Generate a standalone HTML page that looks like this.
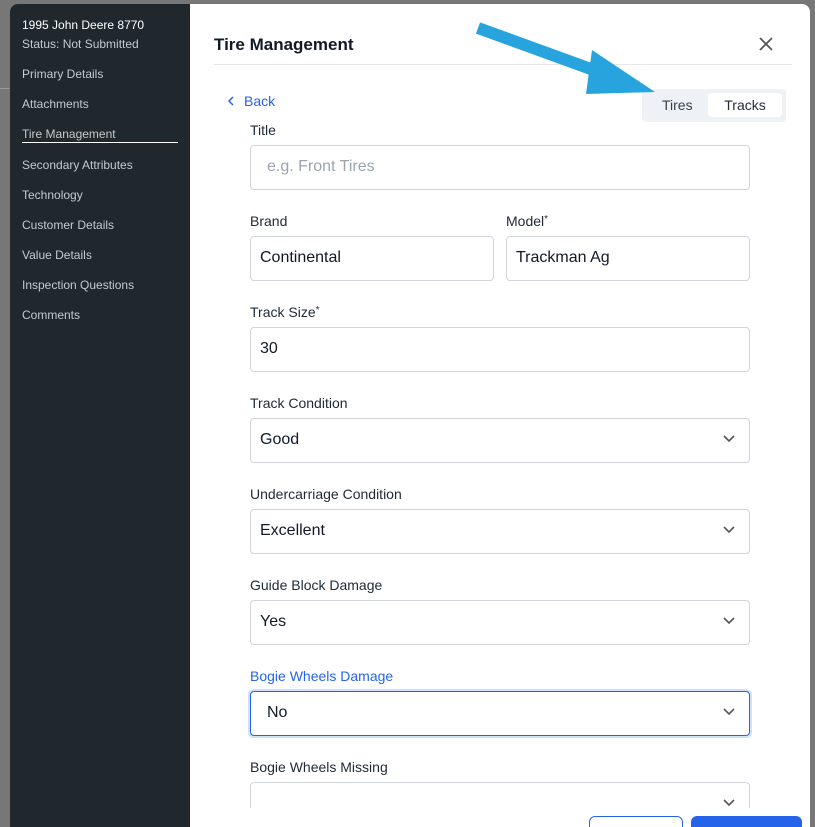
<!DOCTYPE html>
<html><head><style>
*{box-sizing:border-box;margin:0;padding:0}
html,body{width:815px;height:827px;overflow:hidden}
body{background:#777;font-family:"Liberation Sans",sans-serif;position:relative}
.side{position:absolute;left:10px;top:4px;width:180px;height:823px;background:#21282d;border-radius:8px 0 0 0;color:#c5c9cc;font-size:12px}
.side div{position:absolute;left:12px}
.modal{position:absolute;left:190px;top:4px;width:620px;height:823px;background:#fff;border-radius:0 8px 0 0;overflow:hidden}
.abs{position:absolute}
.lbl{position:absolute;left:60px;font-size:14px;color:#1f2937}
.inp{position:absolute;left:60px;width:500px;height:45px;border:1px solid #d1d5db;border-radius:4px;font-size:16px;color:#111827;padding:12px 9px}
.chev{position:absolute;right:14px;top:16px}
sup{font-size:10px;vertical-align:4px}
</style></head><body>
<div class="abs" style="left:0;top:88px;width:10px;height:1px;background:#999"></div>
<div class="side">
<div style="top:14px;color:#fff">1995 John Deere 8770</div>
<div style="top:33px">Status: Not Submitted</div>
<div style="top:63px">Primary Details</div>
<div style="top:93px">Attachments</div>
<div style="top:123px">Tire Management</div>
<div style="top:138px;width:156px;height:1px;background:#fff"></div>
<div style="top:154px">Secondary Attributes</div>
<div style="top:184px">Technology</div>
<div style="top:214px">Customer Details</div>
<div style="top:244px">Value Details</div>
<div style="top:274px">Inspection Questions</div>
<div style="top:304px">Comments</div>
</div>
<div class="modal">
<div class="abs" style="left:24px;top:31px;font-size:17px;font-weight:bold;color:#111827">Tire Management</div>
<svg class="abs" style="left:569px;top:33px" width="14" height="14"><path d="M1 1L13 13M13 1L1 13" stroke="#555" stroke-width="1.8"/></svg>
<div class="abs" style="left:24px;top:60px;width:578px;height:1px;background:#e5e7eb"></div>
<svg class="abs" style="left:37px;top:92px" width="8" height="10"><path d="M6 1L2 5L6 9" stroke="#2563eb" stroke-width="1.5" fill="none"/></svg>
<div class="abs" style="left:54px;top:89px;font-size:14px;color:#2563eb">Back</div>
<div class="abs" style="left:452px;top:85px;width:144px;height:33px;background:#eef1f5;border-radius:4px"></div>
<div class="abs" style="left:472px;top:93px;font-size:14px;color:#374151">Tires</div>
<div class="abs" style="left:518px;top:89px;width:74px;height:24px;background:#fff;border-radius:4px;font-size:14px;color:#1f2937;text-align:center;padding-top:4px">Tracks</div>

<div class="lbl" style="top:118px">Title</div>
<div class="inp" style="top:141px;color:#9ca3af;padding-left:16px">e.g. Front Tires</div>
<div class="lbl" style="top:209px">Brand</div>
<div class="inp" style="top:232px;width:244px">Continental</div>
<div class="lbl" style="top:209px;left:316px">Model<sup>*</sup></div>
<div class="inp" style="top:232px;left:316px;width:244px">Trackman Ag</div>
<div class="lbl" style="top:300px">Track Size<sup>*</sup></div>
<div class="inp" style="top:323px">30</div>
<div class="lbl" style="top:391px">Track Condition</div>
<div class="inp" style="top:414px">Good<svg class="chev" width="12" height="8"><path d="M1 1L6 6L11 1" stroke="#555" stroke-width="1.6" fill="none"/></svg></div>
<div class="lbl" style="top:482px">Undercarriage Condition</div>
<div class="inp" style="top:505px">Excellent<svg class="chev" width="12" height="8"><path d="M1 1L6 6L11 1" stroke="#555" stroke-width="1.6" fill="none"/></svg></div>
<div class="lbl" style="top:573px">Guide Block Damage</div>
<div class="inp" style="top:596px">Yes<svg class="chev" width="12" height="8"><path d="M1 1L6 6L11 1" stroke="#555" stroke-width="1.6" fill="none"/></svg></div>
<div class="lbl" style="top:664px;color:#2563eb">Bogie Wheels Damage</div>
<div class="inp" style="top:687px;border-color:#2563eb;box-shadow:0 0 0 2px #cfe0fb;padding-left:16px">No<svg class="chev" width="12" height="8"><path d="M1 1L6 6L11 1" stroke="#555" stroke-width="1.6" fill="none"/></svg></div>
<div class="lbl" style="top:755px">Bogie Wheels Missing</div>
<div class="inp" style="top:778px;height:40px;border-bottom:none;border-radius:4px 4px 0 0"><svg class="chev" style="top:16px" width="12" height="8"><path d="M1 1L6 6L11 1" stroke="#555" stroke-width="1.6" fill="none"/></svg></div>
<div class="abs" style="left:0;top:804px;width:620px;height:21px;background:#fff"></div>
<div class="abs" style="left:399px;top:812px;width:94px;height:20px;border:1px solid #2563eb;border-radius:6px;background:#fff"></div>
<div class="abs" style="left:501px;top:812px;width:111px;height:20px;background:#2563eb;border-radius:6px"></div>
</div>
<svg class="abs" style="left:470px;top:14px" width="185" height="80"><path d="M8 14L140 62" stroke="#27a3de" stroke-width="12"/><path d="M122 36L185 78L116 80Z" fill="#27a3de"/></svg>
</body></html>
